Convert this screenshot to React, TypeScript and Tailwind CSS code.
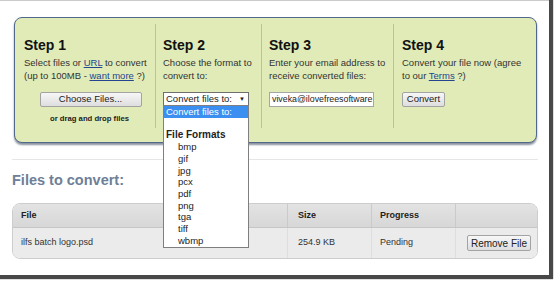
import React from "react";

const FORMATS = ["bmp", "gif", "jpg", "pcx", "pdf", "png", "tga", "tiff", "wbmp"];

const font = { fontFamily: '"Liberation Sans", Arial, sans-serif' };

function GrayButton({ children, className = "" }: { children: React.ReactNode; className?: string }) {
  return (
    <button
      className={`flex items-center justify-center rounded-[2px] border border-[#a3a3a3] bg-gradient-to-b from-[#f7f7f7] to-[#dedede] text-[9.5px] text-[#222] ${className}`}
    >
      {children}
    </button>
  );
}

function StepHeading({ children }: { children: React.ReactNode }) {
  return <h2 className="text-[14px] font-bold leading-[16px] text-[#111]">{children}</h2>;
}

function FormatSelect() {
  return (
    <div className="relative mt-[10px] w-[86px]">
      <div className="flex h-[14px] items-center justify-between border border-[#6f6f6f] bg-white pl-[2px] pr-[3px] text-[9.5px] text-[#222]">
        <span>Convert files to:</span>
        <span className="text-[6px]">▼</span>
      </div>
      <ul className="absolute left-0 top-[13px] z-10 w-[86px] border border-[#7f7f7f] bg-white pb-[1px] text-[9.5px] leading-[11.7px] text-[#222]">
        <li className="bg-[#3a8ff0] pl-[2px] text-white">Convert files to:</li>
        <li className="h-[11.7px]" />
        <li className="pl-[2px] text-[10px] font-bold">File Formats</li>
        {FORMATS.map((f) => (
          <li key={f} className="pl-[14px]">
            {f}
          </li>
        ))}
      </ul>
    </div>
  );
}

export default function App() {
  return (
    <div className="h-[282px] w-[554px] bg-white" style={font}>
      <div className="h-[275px] w-[549px] border-t border-[#cbcbcb] bg-white shadow-[2px_2px_1px_2px_rgba(40,40,40,0.85)]">
        {/* steps panel */}
        <div className="ml-[14px] mt-[16px] flex h-[126px] w-[523px] rounded-[8px] border border-[#50698a] bg-[#e0ebb8] pb-[14px] pt-[6px] shadow-[0_2px_2px_rgba(40,55,80,0.55)]">
          <div className="flex w-[140px] flex-col pl-[9px] pt-[13px]">
            <StepHeading>Step 1</StepHeading>
            <p className="mt-[3px] whitespace-nowrap text-[9.5px] leading-[13px] text-[#333]">
              Select files or <a className="text-[#23468f] underline">URL</a> to convert
              <br />
              (up to 100MB - <a className="text-[#23468f] underline">want more</a> ?)
            </p>
            <GrayButton className="mx-auto mt-[10px] h-[15px] w-[102px] translate-x-[1px]">Choose Files...</GrayButton>
            <p className="mt-[7px] text-center text-[7.7px] font-bold leading-[10px] text-[#222]">or drag and drop files</p>
          </div>

          <div className="flex w-[106px] flex-col border-l border-[#b9c2a4] pl-[7px] pt-[13px]">
            <StepHeading>Step 2</StepHeading>
            <p className="mt-[3px] whitespace-nowrap text-[9.5px] leading-[13px] text-[#333]">
              Choose the format to
              <br />
              convert to:
            </p>
            <FormatSelect />
          </div>

          <div className="flex w-[132px] flex-col border-l border-[#b9c2a4] pl-[7px] pt-[13px]">
            <StepHeading>Step 3</StepHeading>
            <p className="mt-[3px] whitespace-nowrap text-[9.5px] leading-[13px] text-[#333]">
              Enter your email address to
              <br />
              receive converted files:
            </p>
            <div className="mt-[10px] flex h-[15px] w-[105px] items-center whitespace-nowrap border border-[#a5a5a5] bg-white pl-[2px] text-[8.8px] text-[#222]">
              viveka@ilovefreesoftware
            </div>
          </div>

          <div className="flex flex-1 flex-col border-l border-[#b9c2a4] pl-[8px] pt-[13px]">
            <StepHeading>Step 4</StepHeading>
            <p className="mt-[3px] whitespace-nowrap text-[9.5px] leading-[13px] text-[#333]">
              Convert your file now (agree
              <br />
              to our <a className="text-[#23468f] underline">Terms</a> ?)
            </p>
            <GrayButton className="mt-[10px] h-[15px] w-[43px]">Convert</GrayButton>
          </div>
        </div>

        {/* files list */}
        <div className="ml-[12px] w-[526px]">
          <div className="mt-[16px] h-px bg-[#e6e6e6]" />
          <h3 className="mt-[11px] text-[14.5px] font-bold leading-[18px] text-[#6e8098]">Files to convert:</h3>

          <div className="mt-[14px] overflow-hidden rounded-[8px] border border-[#cdcdcd] text-[9px] text-[#333]">
            <div className="grid h-[24px] grid-cols-[274px_84px_84px_1fr] border-b border-[#c6c6c6] bg-gradient-to-b from-[#e3e3e3] to-[#d7d7d7] font-bold text-[#222]">
              <div className="flex items-center pl-[8px]">File</div>
              <div className="flex items-center border-l border-[#cacaca] pl-[10px]">Size</div>
              <div className="flex items-center border-l border-[#cacaca] pl-[8px]">Progress</div>
              <div className="border-l border-[#cacaca]" />
            </div>
            <div className="grid h-[30px] grid-cols-[274px_84px_84px_1fr] bg-[#ebebeb]">
              <div className="flex items-center pl-[8px]">ilfs batch logo.psd</div>
              <div className="flex items-center border-l border-[#dedede] pl-[10px]">254.9 KB</div>
              <div className="flex items-center border-l border-[#dedede] pl-[8px]">Pending</div>
              <div className="flex items-center border-l border-[#dedede] pl-[11px]">
                <GrayButton className="h-[16px] w-[64px] text-[10px]">Remove File</GrayButton>
              </div>
            </div>
          </div>
        </div>
      </div>
    </div>
  );
}
